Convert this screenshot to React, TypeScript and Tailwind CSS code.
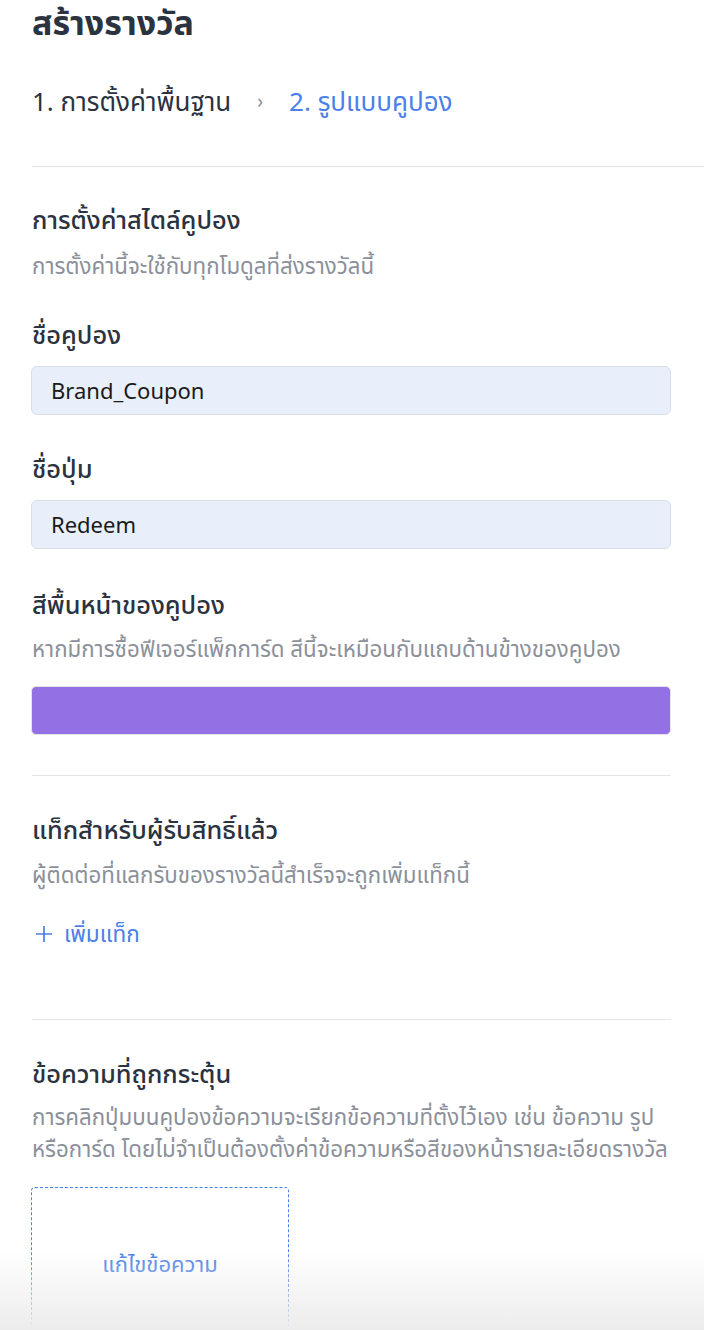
import React from "react";

const font = { fontFamily: '"Noto Sans", "Noto Sans Thai", "Open Sans", sans-serif' };

function Heading({ children }: { children: React.ReactNode }) {
  return <div className="text-[25.4px] leading-[32px] font-medium text-[#2b3240]">{children}</div>;
}
function Desc({ children }: { children: React.ReactNode }) {
  return <div className="text-[22.3px] leading-[32px] text-[#8b909a]">{children}</div>;
}

export default function App() {
  return (
    <div style={font} className="relative h-[1330px] w-[704px] overflow-hidden bg-white">
      <div className="pl-[32px]">
        <h1 className="text-[34px] leading-[44px] font-bold text-[#2b3240]">สร้างรางวัล</h1>
        <div className="mt-[41px] flex items-center text-[26px] leading-[32px]">
          <span className="text-[#2b3240]">1. การตั้งค่าพื้นฐาน</span>
          <span className="mx-[26px] text-[19px] text-[#8b909a]">›</span>
          <span className="text-[#4a80e8]">2. รูปแบบคูปอง</span>
        </div>
        <div className="mt-[49px] h-px bg-[#e4e5e8]" />
      </div>

      <div className="pl-[31px] pr-[33px]">
        <div className="mt-[36px] pl-px">
          <Heading>การตั้งค่าสไตล์คูปอง</Heading>
          <div className="mt-[15px]"><Desc>การตั้งค่านี้จะใช้กับทุกโมดูลที่ส่งรางวัลนี้</Desc></div>
        </div>

        <div className="mt-[36px] pl-px">
          <Heading>ชื่อคูปอง</Heading>
        </div>
        <div className="mt-[16px] flex h-[49px] items-center rounded-[6px] border border-[#d9dee6] bg-[#e8effb] px-[19px] text-[22px] text-[#1a1a1a]">
          Brand_Coupon
        </div>

        <div className="mt-[37px] pl-px">
          <Heading>ชื่อปุ่ม</Heading>
        </div>
        <div className="mt-[16px] flex h-[49px] items-center rounded-[6px] border border-[#d9dee6] bg-[#e8effb] px-[19px] text-[22px] text-[#1a1a1a]">
          Redeem
        </div>

        <div className="mt-[39px] pl-px">
          <Heading>สีพื้นหน้าของคูปอง</Heading>
          <div className="mt-[13px]"><Desc>หากมีการซื้อฟีเจอร์แพ็กการ์ด สีนี้จะเหมือนกับแถบด้านข้างของคูปอง</Desc></div>
        </div>
        <div className="mt-[21px] h-[49px] rounded-[5px] border border-[#e4e5e8] bg-[#9371e5]" />

        <div className="mt-[40px] ml-px h-px bg-[#e4e5e8]" />

        <div className="mt-[37px] pl-px">
          <Heading>แท็กสำหรับผู้รับสิทธิ์แล้ว</Heading>
          <div className="mt-[14px]"><Desc>ผู้ติดต่อที่แลกรับของรางวัลนี้สำเร็จจะถูกเพิ่มแท็กนี้</Desc></div>
          <div className="mt-[27px] flex items-center gap-[11px] pl-[3px] text-[22.5px] leading-[32px] text-[#4a80e8]">
            <svg width="18" height="18" viewBox="0 0 18 18" fill="none" stroke="#4a80e8" strokeWidth="1.7">
              <path d="M9 1v16M1 9h16" />
            </svg>
            <span>เพิ่มแท็ก</span>
          </div>
        </div>

        <div className="mt-[69px] ml-px h-px bg-[#e4e5e8]" />

        <div className="mt-[37px] pl-px">
          <Heading>ข้อความที่ถูกกระตุ้น</Heading>
          <div className="mt-[12px]">
            <Desc>
              การคลิกปุ่มบนคูปองข้อความจะเรียกข้อความที่ตั้งไว้เอง เช่น ข้อความ รูป
              <br />
              หรือการ์ด โดยไม่จำเป็นต้องตั้งค่าข้อความหรือสีของหน้ารายละเอียดรางวัล
            </Desc>
          </div>
        </div>
        <div className="mt-[22px] flex h-[200px] w-[258px] items-start justify-center rounded-[4px] border border-dashed border-[#4a80e8] pt-[59px] text-[22px] leading-[32px] text-[#4a80e8]">
          แก้ไขข้อความ
        </div>
      </div>

      <div className="pointer-events-none absolute bottom-0 left-0 right-0 h-[80px] bg-gradient-to-b from-[#ffffff00] to-[#ececec]" />
    </div>
  );
}
